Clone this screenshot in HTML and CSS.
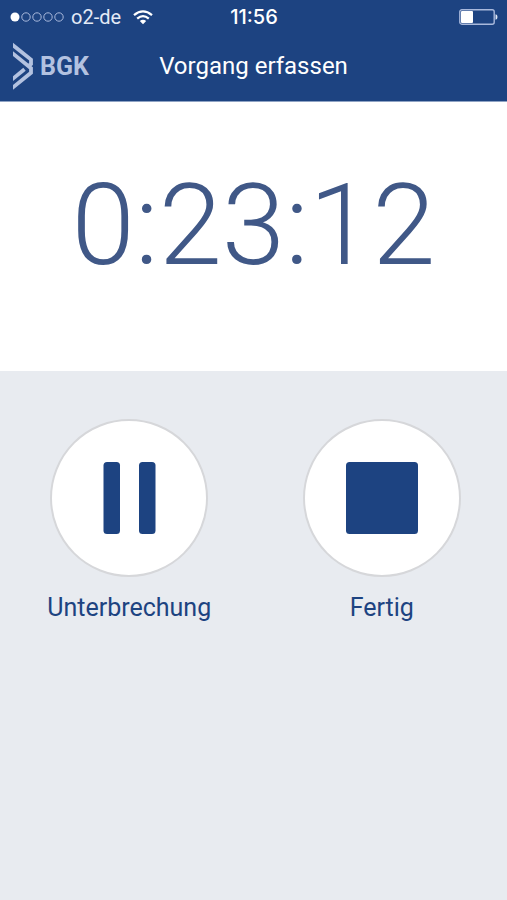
FILE: index.html
```html
<!DOCTYPE html>
<html lang="de">
<head>
    <meta charset="UTF-8">
    <meta name="viewport" content="width=device-width, initial-scale=1.0">
    <title>Vorgang erfassen</title>
    <link rel="stylesheet" href="styles.css">
</head>
<body>
    <header class="header">
        <div class="status-bar">
            <div class="carrier">
                <svg class="signal" width="54" height="12" viewBox="0 0 54 12" fill="none" stroke="#a9b9dc" aria-hidden="true">
                    <circle cx="5" cy="6" r="4.5" fill="#fff" stroke="none"/>
                    <circle cx="16" cy="6" r="4.2"/>
                    <circle cx="27" cy="6" r="4.2"/>
                    <circle cx="38" cy="6" r="4.2"/>
                    <circle cx="49" cy="6" r="4.2"/>
                </svg>
                <span>o2-de</span>
                <svg class="wifi" width="20" height="15" viewBox="0 0 20 15" fill="none" stroke="#fff" stroke-width="2.3" aria-hidden="true">
                    <path d="M1 5.2Q10-2.4 19 5.2"/>
                    <path d="M4.2 8.6Q10 3.6 15.8 8.6"/>
                    <path d="M6.8 11Q10 8.3 13.2 11L10 14.2Z" fill="#fff" stroke="none"/>
                </svg>
            </div>
            <time class="clock">11:56</time>
            <svg class="battery" width="39" height="16" viewBox="0 0 39 16" aria-hidden="true">
                <rect x="0.8" y="0.8" width="34.4" height="14.4" rx="2" fill="none" stroke="#a9b9dc" stroke-width="1.4"/>
                <rect x="2" y="2" width="12" height="12" rx="1" fill="#fff"/>
                <path d="M36.5 5.2Q38.5 5.5 38.5 8T36.5 10.8Z" fill="#dfe6f4"/>
            </svg>
        </div>
        <div class="title-bar">
            <a class="logo" href="#">
                <svg width="21" height="48" viewBox="0 0 21 48" fill="none" stroke="#b3c2e0" stroke-width="3.8" aria-hidden="true">
                    <path d="M-2 1.6L18 17.6V22L14.5 24.8"/>
                    <path d="M-2 10L18 26.2V30.8L-2 47"/>
                    <path d="M-2 38.3L11.5 27.2"/>
                </svg>
                <span>BGK</span>
            </a>
            <h1 class="title">Vorgang erfassen</h1>
        </div>
    </header>
    <main>
        <section class="timer">
            <time class="timer-value">0:23:12</time>
        </section>
        <section class="actions">
            <button class="action" type="button">
                <span class="circle">
                    <svg width="72" height="72" viewBox="0 0 72 72" fill="#1d4381" aria-hidden="true">
                        <rect x="10.5" y="0" width="16.5" height="72" rx="3.5"/>
                        <rect x="46" y="0" width="16.5" height="72" rx="3.5"/>
                    </svg>
                </span>
                <span>Unterbrechung</span>
            </button>
            <button class="action" type="button">
                <span class="circle">
                    <svg width="72" height="72" viewBox="0 0 72 72" fill="#1d4381" aria-hidden="true">
                        <rect width="72" height="72" rx="3.5"/>
                    </svg>
                </span>
                <span>Fertig</span>
            </button>
        </section>
    </main>
</body>
</html>
```
FILE: styles.css
```css
* {
    box-sizing: border-box;
}
body {
    margin: 0;
    min-height: 100vh;
    background-color: #e8ebf0;
    color: #1d4381;
    font-family: Roboto, "Liberation Sans", sans-serif;
}
.header {
    background-color: #1d4381;
    color: #fff;
    border-bottom: 1px solid #8fa3c4;
}
.status-bar {
    display: grid;
    grid-template-columns: 1fr auto 1fr;
    align-items: center;
    height: 34px;
    padding: 0 9px 0 10px;
}
.carrier {
    display: flex;
    align-items: center;
    gap: 7px;
    font-size: 20px;
    color: #e4eaf6;
}
.wifi {
    margin-left: 5px;
}
.clock {
    font-family: Inter, "Liberation Sans", sans-serif;
    font-size: 20px;
    font-weight: 500;
}
.battery {
    justify-self: end;
}
.title-bar {
    display: grid;
    grid-template-columns: 1fr auto 1fr;
    align-items: center;
    height: 67px;
    padding: 0 13px 3px;
}
.logo {
    display: flex;
    align-items: center;
    gap: 6px;
    color: #b3c2e0;
    font-size: 25px;
    font-weight: bold;
    text-decoration: none;
}
.title {
    margin: 0;
    font-size: 24px;
    font-weight: 400;
}
.timer {
    display: flex;
    justify-content: center;
    padding: 56px 0 78px;
    background-color: #fff;
}
.timer-value {
    color: #405887;
    font-size: 114px;
    font-weight: 300;
    line-height: 135px;
}
.actions {
    display: grid;
    grid-template-columns: 1fr 1fr;
    gap: 2px;
    padding: 48px 0 40px 4px;
}
.action {
    display: flex;
    flex-direction: column;
    align-items: center;
    justify-self: center;
    gap: 16px;
    padding: 0;
    border: none;
    background: none;
    color: #1d4381;
    font-family: inherit;
    font-size: 25px;
    line-height: 30px;
    cursor: pointer;
}
.circle {
    display: flex;
    align-items: center;
    justify-content: center;
    width: 158px;
    height: 158px;
    border: 2px solid #d6d7da;
    border-radius: 50%;
    background-color: #fff;
}
```
